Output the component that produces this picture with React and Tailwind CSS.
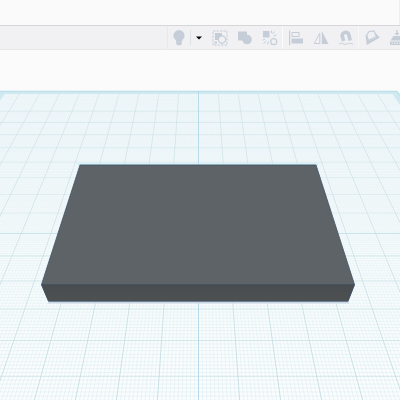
const HORIZON = -194;
const CENTER = 198.5;
const SCALE = 0.0691;
const ROW_STEP = 0.0001172;
const ROW_ORIGIN = 0.0023395;

const rowY = (k) => 1 / (ROW_ORIGIN - k * ROW_STEP) + HORIZON;
const colX = (k, y) => CENTER + k * SCALE * (y - HORIZON);

const range = (from, to) => Array.from({ length: to - from + 1 }, (_, i) => from + i);
const TOP = rowY(-10);
const BOTTOM = 400;

function edge(k, top) {
  return `${colX(-k, top)},${top} ${colX(k, top)},${top} ${colX(k, BOTTOM)},${BOTTOM} ${colX(-k, BOTTOM)},${BOTTOM}`;
}

const minorRows = range(-97, 56).filter((i) => i % 10 !== 0);
const minorCols = range(-97, 97).filter((i) => i % 10 !== 0);

function Workplane() {
  return (
    <svg viewBox="0 50 400 350" className="block w-full" role="img" aria-label="Workplane with a box">
      <defs>
        <linearGradient id="plane" x1="0" y1="0" x2="0" y2="1">
          <stop offset="0" stopColor="#eef6f9" />
          <stop offset="0.5" stopColor="#f6fbfc" />
          <stop offset="1" stopColor="#fbfdfe" />
        </linearGradient>
        <linearGradient id="minor" gradientUnits="userSpaceOnUse" x1="0" y1="91" x2="0" y2="400">
          <stop offset="0" stopColor="#c3dfe6" stopOpacity="0.05" />
          <stop offset="0.5" stopColor="#c3dfe6" stopOpacity="0.18" />
          <stop offset="1" stopColor="#c3dfe6" stopOpacity="0.42" />
        </linearGradient>
        <linearGradient id="major" gradientUnits="userSpaceOnUse" x1="0" y1="91" x2="0" y2="400">
          <stop offset="0" stopColor="#c2d9df" stopOpacity="0.6" />
          <stop offset="1" stopColor="#bad8df" stopOpacity="1" />
        </linearGradient>
        <linearGradient id="face" x1="0" y1="0" x2="0" y2="1">
          <stop offset="0" stopColor="#484c4e" />
          <stop offset="1" stopColor="#4e5152" />
        </linearGradient>
        <clipPath id="inside">
          <polygon points={edge(9.85, 94)} />
        </clipPath>
      </defs>
      <polygon points={edge(10.08, TOP + 0.5)} fill="#d0e9f1" stroke="#b0dce8" />
      <polygon points={edge(9.75, 94)} fill="url(#plane)" />
      <g clipPath="url(#inside)">
        <g stroke="url(#minor)" strokeWidth="0.7">
          {minorCols.map((k) => (
            <line key={k} x1={colX(k / 10, 94)} y1={94} x2={colX(k / 10, BOTTOM) + 0.01} y2={BOTTOM} />
          ))}
        </g>
        <g fill="#c3dfe6">
          {minorRows.map((k) => (
            <rect
              key={k}
              x="0"
              y={rowY(k / 10) - 0.35}
              width="400"
              height="0.7"
              fillOpacity={Math.max(0.04, (0.42 * (rowY(k / 10) - 80)) / 320)}
            />
          ))}
        </g>
        <g stroke="url(#major)" strokeWidth="0.8">
          {range(-9, 9).map((k) => (
            <line key={k} x1={colX(k, 94)} y1={94} x2={colX(k, BOTTOM) + 0.01} y2={BOTTOM} />
          ))}
        </g>
        <g stroke="#c2dde3" strokeWidth="0.8">
          {range(-8, 5).map((k) => (
            <line key={k} x1="0" y1={rowY(k)} x2="400" y2={rowY(k)} strokeOpacity={k < 0 ? 0.55 : 0.9} />
          ))}
        </g>
      </g>
      <path d="M198.5 91V400" stroke="#b7dae8" />
      <path d="M0 233.5H400" stroke="#c6e2ea" />
      <path d="M48 302H349" stroke="#c9d7e3" strokeWidth="3" />
      <path d="M78 164.5H318" stroke="#c5e9f3" strokeWidth="2" />
      <path d="M80 165H316L354.5 284.5L348 301H48.5L41.5 284.5Z" fill="#5d6366" stroke="#405266" strokeWidth="0.8" />
      <path d="M41.5 284.5H354.5L348 301H48.5Z" fill="url(#face)" stroke="#405266" strokeWidth="0.8" />
    </svg>
  );
}

const icons = {
  bulb: (
    <>
      <path d="M8 0a5.600 5.600 0 0 0-5.600 5.600c0 2.100 1.200 3.200 2.100 4.500.4.600.6 1.100.6 1.700h5.800c0-.6.2-1.100.6-1.700.9-1.300 2.100-2.400 2.100-4.500A5.600 5.600 0 0 0 8 0Z" />
      <path d="M5.200 11.500h5.600v2.500L9.500 15.200h-3L5.200 14Z" />
    </>
  ),
  group: (
    <>
      <rect x="1" y="1" width="14" height="14" fill="none" stroke="currentColor" strokeDasharray="2.500 1" />
      <rect x="3" y="3" width="7" height="7" />
      <circle cx="10" cy="9.500" r="3.600" fill="#f1f1f4" stroke="currentColor" strokeWidth="1.200" />
      <path d="M2.500 11.500h2.500v2H2.500Z" />
    </>
  ),
  merge: (
    <>
      <rect x="1" y="1.500" width="9" height="9" rx="0.500" />
      <circle cx="10" cy="9.500" r="4.800" />
    </>
  ),
  ungroup: (
    <>
      <rect x="1" y="1" width="6.500" height="6.500" />
      <circle cx="11.700" cy="11.700" r="3" fill="none" stroke="currentColor" strokeWidth="1.200" />
      <path d="M9.500 3V.5M10.500 4l2-2.500M11.500 6l3-1M3 9.500l-2.500.5M4.500 11l-3 2.500M6.500 11.500l-1 3" fill="none" stroke="currentColor" />
    </>
  ),
  align: (
    <>
      <path d="M1 .5h1.200v14.500H1ZM3.500 8.500H15v5H3.500Z" />
      <rect x="4" y="2.500" width="7" height="4" fill="none" stroke="currentColor" />
    </>
  ),
  mirror: (
    <>
      <path d="M8.800 1V14H15.500Z" />
      <path d="M6.800 3V13.500H1.200Z" fill="none" stroke="currentColor" />
    </>
  ),
  magnet: (
    <>
      <path d="M5.600 11 4.300 6.500C3.800 4 5.300 2.500 7.500 2.200c2.200 0 3.300 1.500 3.600 3.500l1 4.800" fill="none" stroke="currentColor" strokeWidth="3.600" />
      <path d="M1 14.200c1.500-1.200 2.500-1.200 4-.4s2.500.6 4 0 3-.8 6 .2" fill="none" stroke="currentColor" strokeWidth="0.900" />
    </>
  ),
  plane: (
    <>
      <path d="M1.500 5.500 2.800 15 15.800 7.500 11.500 3l.8 4.500-7.800 3.500-1-5.500Z" />
      <path d="M2.500 5.500 5 1.500l5-.5 2.300 5.500-7.800 4Z" fill="none" stroke="currentColor" strokeWidth="1.200" />
    </>
  ),
  drop: (
    <>
      <path d="M7.300 0h1.400v3h2L8 5.500 5.300 3h2ZM4.500 6h7l3 4.500h-13Z" />
      <path d="M1 11.500h14V15H1Z" />
      <path d="M2.500 13.200h11" stroke="#f1f1f4" strokeDasharray="1.500 1" />
    </>
  ),
};

function Tool({ name, label, narrow }) {
  return (
    <button
      type="button"
      aria-label={label}
      className={`flex h-full shrink-0 items-center justify-center ${narrow ? "w-[22px]" : "w-[25px]"}`}
    >
      <svg viewBox="0 0 16 16" className="size-4" fill="currentColor" aria-hidden="true">
        {icons[name]}
      </svg>
    </button>
  );
}

export default function App() {
  return (
    <div className="min-h-screen overflow-hidden bg-[#fbfbfb]">
      <header className="h-[25px] border-r border-[#eeeeef] bg-[#fafafa]" />
      <nav
        aria-label="Shape tools"
        className="flex h-[25px] items-stretch overflow-hidden border-t border-b border-t-[#d6d6d8] border-b-[#e8e8ea] bg-[#f1f1f4] pl-[167px] text-[#c5ced8]"
      >
        <div className="flex shrink-0 border-l border-[#e8e9ec]">
          <Tool name="bulb" label="Show all" narrow />
          <button
            type="button"
            aria-label="Visibility options"
            className="my-1 flex w-[17px] items-center justify-center border-l border-[#dfe2e6] text-black"
          >
            <svg viewBox="0 0 6 4" className="h-1 w-1.5" fill="currentColor" aria-hidden="true">
              <path d="M0 .5h6L3 3.500Z" />
            </svg>
          </button>
        </div>
        <div className="flex shrink-0">
          <Tool name="group" label="Bundle" />
          <Tool name="merge" label="Group" />
          <Tool name="ungroup" label="Ungroup" />
        </div>
        <div className="flex shrink-0 border-l border-[#fafafa]">
          <Tool name="align" label="Align" />
          <Tool name="mirror" label="Mirror" />
          <Tool name="magnet" label="Magnet" />
        </div>
        <div className="flex shrink-0 border-l border-[#f8f8f9]">
          <Tool name="plane" label="Cruise" />
          <Tool name="drop" label="Drop to workplane" />
        </div>
      </nav>
      <main>
        <Workplane />
      </main>
    </div>
  );
}
